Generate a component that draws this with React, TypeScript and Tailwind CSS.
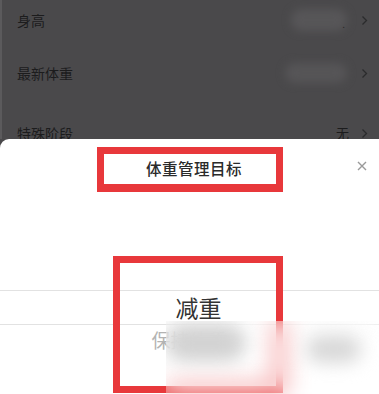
import React from "react";

const Chevron = () => (
  <svg width="7" height="11" viewBox="0 0 7 11" className="shrink-0">
    <polyline points="1.5,1.5 5.5,5.5 1.5,9.5" fill="none" stroke="#2b2b2c" strokeWidth="1.3" />
  </svg>
);

export default function App() {
  return (
    <div className="relative w-[379px] h-[394px] overflow-hidden bg-[#4a494b] flex flex-col font-['Noto_Sans_CJK_SC','Noto_Sans',sans-serif]">
      {/* dimmed settings list */}
      <div className="h-[139px] shrink-0 overflow-hidden border-l-[2px] border-[#5b5a5c] flex flex-col">
        <div className="h-[40px] shrink-0 flex items-center justify-between pl-[15px] pr-[11px]">
          <span className="text-[14px] text-[#1c1c1d]">身高</span>
          <div className="flex items-center gap-[14px]">
            <div className="relative w-[56px] h-[22px]">
              <div className="absolute inset-0 rounded-full bg-[#575658] blur-[4px]" />
              <span className="absolute right-[2px] bottom-[2px] text-[10px] leading-none text-[#2a2a2a]">.</span>
            </div>
            <Chevron />
          </div>
        </div>
        <div className="h-[66px] shrink-0 flex items-center justify-between pl-[15px] pr-[11px]">
          <span className="text-[14px] text-[#1c1c1d]">最新体重</span>
          <div className="flex items-center gap-[14px]">
            <div className="w-[62px] h-[20px] rounded-full bg-[#565557] blur-[4px]" />
            <Chevron />
          </div>
        </div>
        <div className="h-[54px] shrink-0 flex items-center justify-between pl-[15px] pr-[11px]">
          <span className="text-[14px] text-[#1c1c1d]">特殊阶段</span>
          <div className="flex items-center gap-[12px]">
            <span className="text-[13px] text-[#1c1c1d]">无</span>
            <Chevron />
          </div>
        </div>
      </div>

      {/* bottom sheet */}
      <div className="relative flex-1 bg-white rounded-tl-[9px] flex flex-col">
        <div className="pt-[8px] flex justify-center">
          <div className="w-[186px] h-[45px] border-[7px] border-b-[8px] border-[#e8383b] flex items-center justify-center pl-[9px]">
            <span className="text-[15.5px] font-medium text-[#2a2a2a] tracking-[0.5px]">体重管理目标</span>
          </div>
        </div>
        <svg className="absolute right-[12px] top-[22px]" width="10" height="10" viewBox="0 0 10 10">
          <path d="M1 1 L9 9 M9 1 L1 9" stroke="#9a9a9a" strokeWidth="1.4" />
        </svg>

        <div className="mt-[98px] flex flex-col">
          <div className="h-[35px] border-y border-[#e2e2e2] flex items-center justify-center pl-[18px]">
            <span className="text-[23px] leading-none text-[#333]">减重</span>
          </div>
          <div className="h-[28px] flex items-center justify-center">
            <span className="text-[19px] leading-none text-[#b3b3b3]">保持体重</span>
          </div>
        </div>

        {/* annotation box */}
        <div className="absolute left-[113px] top-[117px] w-[170px] h-[137px] border-[7px] border-[#e8383b]" />

        {/* blurred patch */}
        <div className="absolute left-[166px] top-[182px] w-[213px] h-[73px] overflow-hidden backdrop-blur-[12px] bg-white/20">
          <div className="absolute left-[0px] top-[4px] w-[80px] h-[36px] rounded-full bg-[#d2d2d2] blur-[9px]" />
          <div className="absolute left-[140px] top-[14px] w-[55px] h-[28px] rounded-full bg-[#d8d8d8] blur-[9px]" />
        </div>
      </div>
    </div>
  );
}
